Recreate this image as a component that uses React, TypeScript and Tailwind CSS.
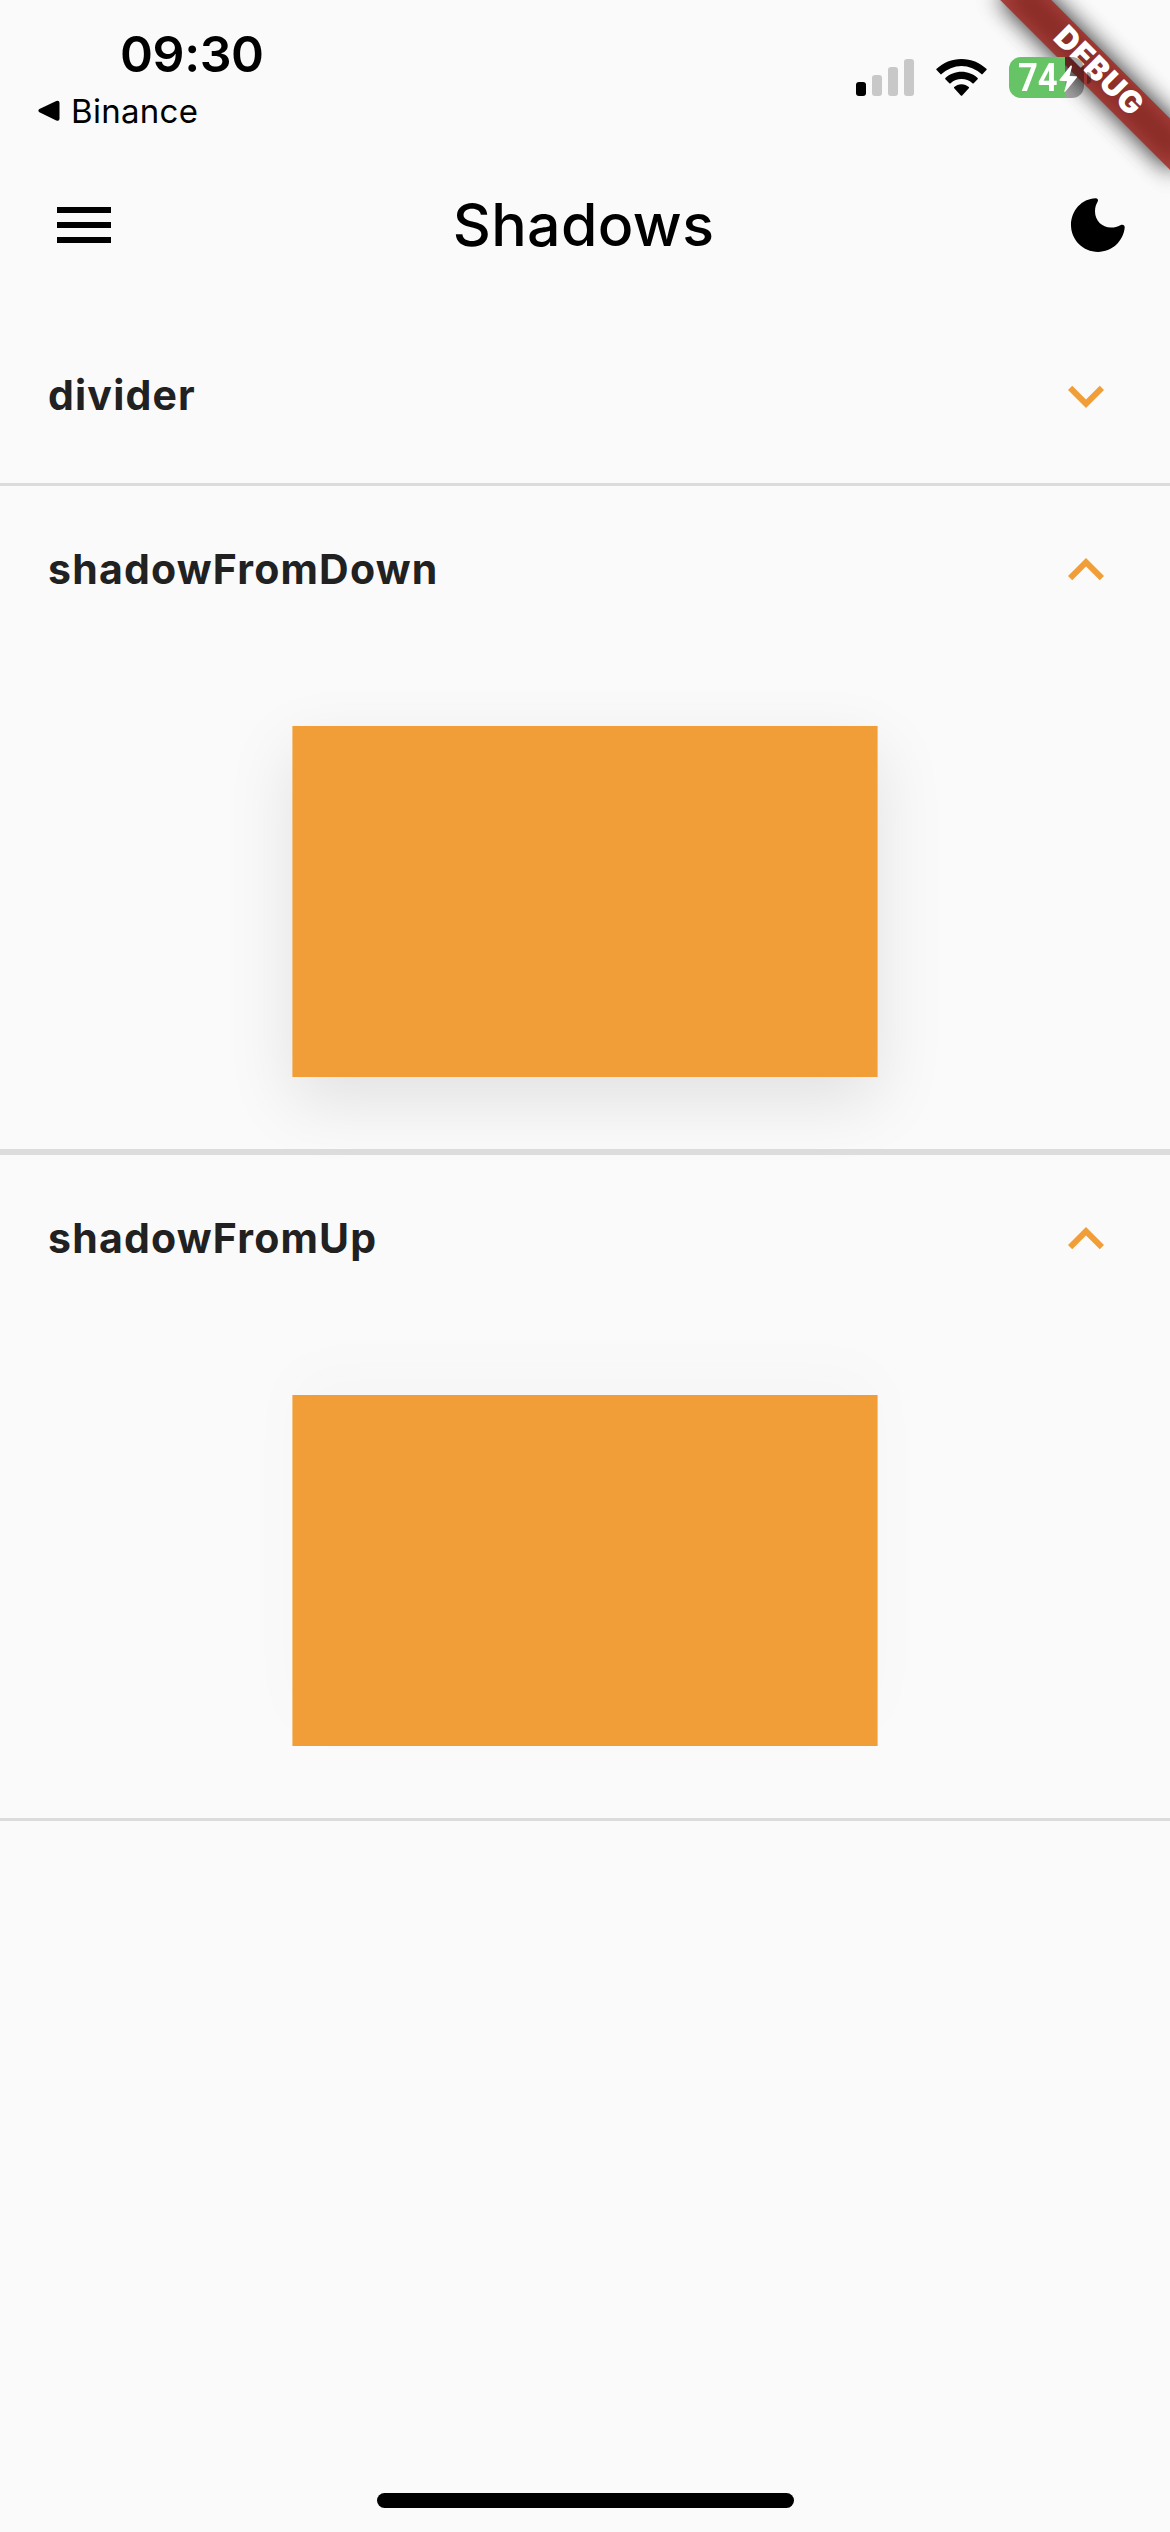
import type { ReactNode } from "react";

function SignalIcon() {
  return (
    <svg width="58" height="38" viewBox="0 0 58 38">
      <rect x="0" y="23" width="10" height="14" rx="3" fill="#000" />
      <rect x="16" y="16" width="10" height="21" rx="3" fill="#c8c8c8" />
      <rect x="32" y="8" width="10" height="29" rx="3" fill="#c8c8c8" />
      <rect x="48" y="0" width="10" height="37" rx="3" fill="#c8c8c8" />
    </svg>
  );
}

function WifiIcon() {
  return (
    <svg width="51" height="38" viewBox="0 0 51 38">
      <path d="M25.5 0C35.1 0 43.9 3.7 50.4 9.8Q51 10.4 50.4 11.1L46.6 15.1Q46 15.7 45.4 15.1A28.8 28.8 0 0 0 5.6 15.1Q5 15.7 4.4 15.1L.6 11.1Q0 10.4.6 9.8C7.1 3.7 15.9 0 25.5 0Z" />
      <path d="M25.5 12.7C31.7 12.7 37.3 15 41.6 18.9Q42.2 19.5 41.6 20.2L37.7 24.2Q37.1 24.8 36.4 24.2A16.6 16.6 0 0 0 14.6 24.2Q13.9 24.8 13.3 24.2L9.4 20.2Q8.8 19.5 9.4 18.9C13.7 15 19.3 12.7 25.5 12.7Z" />
      <path d="M25.5 25.2C28.3 25.2 30.9 26.3 32.8 28Q33.4 28.6 32.8 29.2L26.2 36.4Q25.5 37.2 24.8 36.4L18.2 29.2Q17.6 28.6 18.2 28C20.1 26.3 22.7 25.2 25.5 25.2Z" />
    </svg>
  );
}

function Battery() {
  return (
    <div className="relative z-20 flex items-center gap-[3px]">
      <div className="flex h-[41px] w-[75px] overflow-hidden rounded-[12px]">
        <div className="w-[56px] bg-[#66c466]" />
        <div className="flex-1 bg-black/35" />
      </div>
      <div className="h-[12px] w-[4px] rounded-r-full bg-black/35" />
      <div className="absolute left-[9px] top-[1px] origin-left scale-x-[0.91] font-['Roboto'] text-[38px] font-bold leading-[40px] text-white">
        74
      </div>
      <svg className="absolute left-[50px] top-[8px]" width="19" height="28" viewBox="0 0 19 28">
        <path
          d="M11.7.6L.5 14.7Q0 15.7 1 15.8L8 16.2 5.3 26.2Q5.4 27.4 6.5 26.6L17.9 12.4Q18.3 11.4 17.3 11.3L10.6 11 13 1.4Q12.8.2 11.7.6Z"
          fill="#fff"
        />
      </svg>
    </div>
  );
}

function StatusBar() {
  return (
    <div className="flex h-[156px] justify-between">
      <div className="flex flex-col pt-[24px]">
        <div className="ml-[120px] text-[50px] font-semibold leading-[60px] tracking-[-0.4px]">09:30</div>
        <div className="ml-[38px] mt-[7px] flex items-center gap-[11px]">
          <svg width="22" height="22" viewBox="0 0 22 22">
            <path d="M1.4 9.1L18.3.9Q21.5 0 21.5 3V18.4Q21.5 21.4 18.3 20.4L1.4 12.3Q-.6 10.7 1.4 9.1Z" />
          </svg>
          <div className="text-[33px] font-[430] leading-[40px] tracking-[0.3px]">Binance</div>
        </div>
      </div>
      <div className="mr-[79px] mt-[57px] flex h-[41px] items-center gap-[22px]">
        <SignalIcon />
        <WifiIcon />
        <Battery />
      </div>
    </div>
  );
}

function AppBar() {
  return (
    <div className="flex h-[138px] items-center justify-between pl-[57px] pr-[45px]">
      <div className="flex w-[54px] flex-col gap-[9px]">
        <div className="h-[6px] bg-black" />
        <div className="h-[6px] bg-black" />
        <div className="h-[6px] bg-black" />
      </div>
      <div className="-ml-[15px] text-[59px] font-[450] leading-[72px] tracking-[0.4px]">Shadows</div>
      <svg width="54" height="54" viewBox="0 0 54 54">
        <path d="M24.6.2C26.6.2 27.6 1.9 26.7 3.6C24.8 6.8 24 10 24 13.6C24 22.6 31 29.6 40 29.6C43.8 29.6 46.4 28.6 49.3 27.2C51.8 26 53.9 27.2 53.7 29.8C52.2 43.4 41 53.9 27 53.9C12.1 53.9 0 41.9 0 27C0 12.5 10.8.6 24.6.2Z" />
      </svg>
    </div>
  );
}

function Chevron({ open }: { open: boolean }) {
  return (
    <svg width="72" height="72" viewBox="0 0 24 24" fill="#f19e38">
      {open ? (
        <path d="M12 8l-6 6 1.41 1.41L12 10.83l4.59 4.58L18 14z" />
      ) : (
        <path d="M16.59 8.59L12 13.17 7.41 8.59 6 10l6 6 6-6z" />
      )}
    </svg>
  );
}

function Section({ title, children }: { title: string; children?: ReactNode }) {
  return (
    <section>
      <div className="flex h-[168px] items-center justify-between px-[48px]">
        <h2 className="-mt-[2px] text-[41px] font-[650] leading-[60px] tracking-[1.2px] text-[#212121]">{title}</h2>
        <Chevron open={Boolean(children)} />
      </div>
      {children && <div className="flex justify-center py-[72px]">{children}</div>}
    </section>
  );
}

const boxClass = "h-[351px] w-[586px] border-x border-[#f19e38]/60 bg-[#f19e38] bg-clip-padding";

function BannerLayer() {
  return (
    <>
      <div className="absolute -left-[120px] top-[84px] h-[36px] w-[240px] bg-black/50 blur-[11.9px]" />
      <div className="absolute -left-[130px] top-[84px] h-[36px] w-[260px] bg-[#ac2f29]/63" />
    </>
  );
}

function DebugBanner() {
  return (
    <div className="absolute right-0 top-0 z-10 size-0 rotate-45">
      <BannerLayer />
      <BannerLayer />
      <div className="absolute -left-[120px] top-[82px] w-[240px] text-center text-[31px] font-black leading-[36px] tracking-[0.8px] text-white">
        DEBUG
      </div>
    </div>
  );
}

export default function App() {
  return (
    <div className="relative flex h-[2532px] w-[1170px] flex-col overflow-hidden bg-[#fafafa] font-['Inter',sans-serif] text-black">
      <StatusBar />
      <AppBar />
      <main className="flex flex-1 flex-col pt-[18px]">
        <Section title="divider" />
        <div className="mt-[3px] h-[3px] bg-[#dcdcdc]" />
        <Section title="shadowFromDown">
          <div className={boxClass + " shadow-[0_24px_64px_rgba(0,0,0,0.1)]"} />
        </Section>
        <div className="relative h-[6px] bg-[#dcdcdc]" />
        <Section title="shadowFromUp">
          <div className={boxClass + " shadow-[0_-24px_62px_rgba(0,0,0,0.02)]"} />
        </Section>
        <div className="h-[3px] bg-[#dcdcdc]" />
      </main>
      <div className="mb-[24px] ml-[377px] h-[15px] w-[417px] rounded-full bg-black" />
      <DebugBanner />
    </div>
  );
}
